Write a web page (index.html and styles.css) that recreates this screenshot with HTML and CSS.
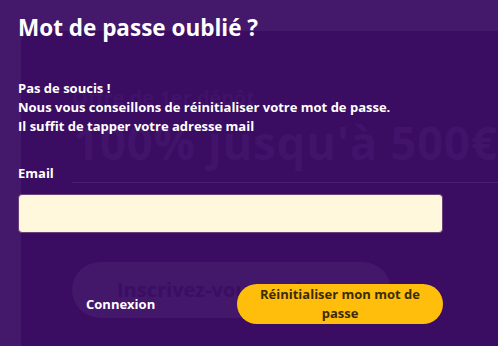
FILE: index.html
```html
<!DOCTYPE html>
<html lang="fr">
<head>
<meta charset="UTF-8">
<meta name="viewport" content="width=device-width, initial-scale=1.0">
<link rel="stylesheet" href="styles.css">
</head>
<body>
<div class="page">
	<div class="panel">
		<p class="offer-label">Offre de 1er dépôt</p>
		<p class="offer-amount">100% jusqu'à 500€</p>
		<div class="offer-line"></div>
		<div class="signup-btn">Inscrivez-vous maintenant</div>
	</div>

	<div class="modal">
		<h1 class="modal-title">Mot de passe oublié ?</h1>
		<p class="modal-text">
			Pas de soucis !<br>
			Nous vous conseillons de réinitialiser votre mot de passe.<br>
			Il suffit de tapper votre adresse mail
		</p>
		<label class="label" for="email">Email</label>
		<input class="input-field" id="email" type="email">
		<div class="actions">
			<a class="login-link" href="#">Connexion</a>
			<button class="reset-btn">Réinitialiser mon mot de passe</button>
		</div>
	</div>
</div>
</body>
</html>
```

FILE: styles.css
```css
body {
	margin: 0;
	padding: 0;
	font-family: "Open Sans", Lato, sans-serif;
	background-color: #44186a;
	overflow: hidden;
}

.page {
	position: relative;
	width: 498px;
	height: 346px;
	padding: 31px 0 0 21px;
	box-sizing: border-box;
}

.panel {
	height: 100%;
	background-color: #3a0c62;
	border-top-left-radius: 12px;
	padding: 55px 0 0 51px;
	box-sizing: border-box;
	overflow: hidden;
	white-space: nowrap;
}

.offer-label {
	margin: 0;
	font-size: 20px;
	font-weight: 700;
	color: #40126a;
	line-height: 24px;
}

.offer-amount {
	margin: 6px 0 0 1px;
	font-size: 46px;
	font-weight: 700;
	color: #41136a;
	line-height: 52px;
	letter-spacing: 0.5px;
}

.offer-line {
	margin-top: 14px;
	height: 1px;
	background-color: #4a1e76;
}

.signup-btn {
	margin-top: 79px;
	width: 319px;
	height: 56px;
	line-height: 56px;
	border-radius: 28px;
	background-color: #43176a;
	color: #3a0e62;
	font-size: 20px;
	font-weight: 700;
	padding-left: 45px;
	box-sizing: border-box;
	overflow: hidden;
}

.modal {
	position: absolute;
	top: 0;
	left: 0;
	width: 443px;
	padding: 12px 0 0 18px;
	box-sizing: border-box;
	color: #fff;
}

.modal-title {
	margin: 0;
	font-size: 22.5px;
	font-weight: 700;
	line-height: 32px;
}

.modal-text {
	margin: 35px 0 0;
	font-size: 13px;
	font-weight: 700;
	line-height: 19px;
}

.label {
	display: block;
	margin-top: 28px;
	font-size: 13px;
	font-weight: 700;
	line-height: 18px;
}

.input-field {
	display: block;
	margin-top: 12px;
	width: 425px;
	height: 39px;
	border: 1px solid #6b4178;
	border-radius: 4px;
	background-color: #fff8dc;
	box-sizing: border-box;
}

.actions {
	display: flex;
	align-items: center;
	margin-top: 51px;
}

.login-link {
	width: 219px;
	padding-left: 68px;
	box-sizing: border-box;
	color: #fff;
	text-decoration: none;
	font-size: 13px;
	font-weight: 700;
}

.reset-btn {
	width: 206px;
	height: 40px;
	padding: 0 14px;
	border: none;
	border-radius: 20px;
	background-color: #ffbe0b;
	color: #3b2c06;
	font-family: inherit;
	font-size: 13px;
	font-weight: 700;
	line-height: 19px;
}
```
